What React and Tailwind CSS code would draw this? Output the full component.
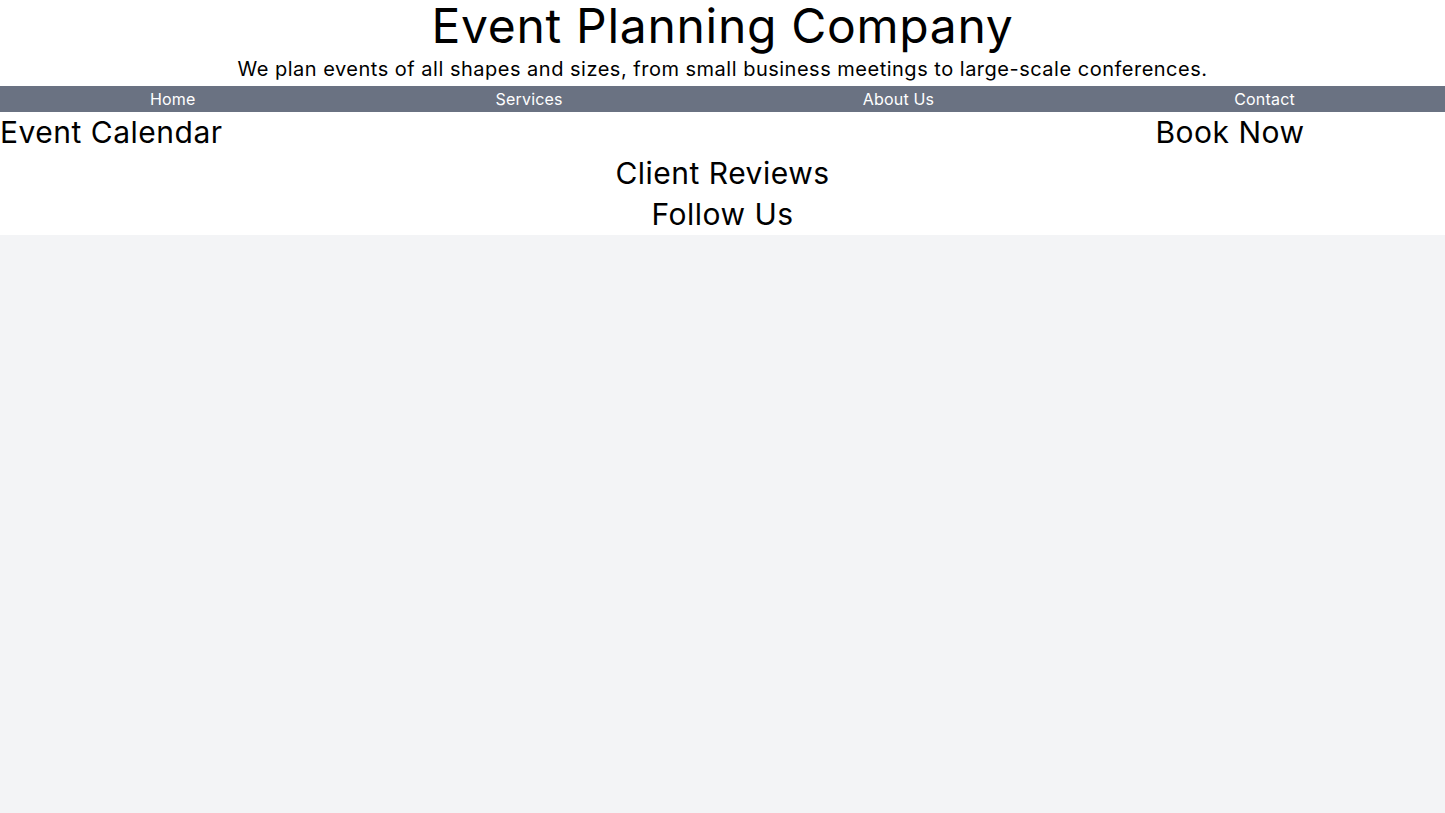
export default function App() {
    return (
        <div className="min-h-screen bg-gray-100 text-black font-['Inter',sans-serif] tracking-[0.5px]">
            <header className="bg-white pb-[3px] text-center">
                <h1 className="text-5xl leading-[52px] tracking-[0.7px]">Event Planning Company</h1>
                <p className="pt-[3px] text-xl leading-7">We plan events of all shapes and sizes, from small business meetings to large-scale conferences.</p>
            </header>
            <nav className="flex justify-around bg-gray-500 text-white leading-[26px] tracking-[0.2px]">
                <a href="#">Home</a>
                <a href="#">Services</a>
                <a href="#">About Us</a>
                <a href="#">Contact</a>
            </nav>
            <main className="bg-white">
                <div className="flex">
                    <section className="flex-1">
                        <h2 className="text-3xl leading-[41px]">Event Calendar</h2>
                    </section>
                    <section className="w-[430px] text-center">
                        <h2 className="text-3xl leading-[41px]">Book Now</h2>
                    </section>
                </div>
                <section className="text-center">
                    <h2 className="text-3xl leading-[41px]">Client Reviews</h2>
                </section>
                <section className="text-center">
                    <h2 className="text-3xl leading-[41px]">Follow Us</h2>
                </section>
            </main>
        </div>
    );
}
